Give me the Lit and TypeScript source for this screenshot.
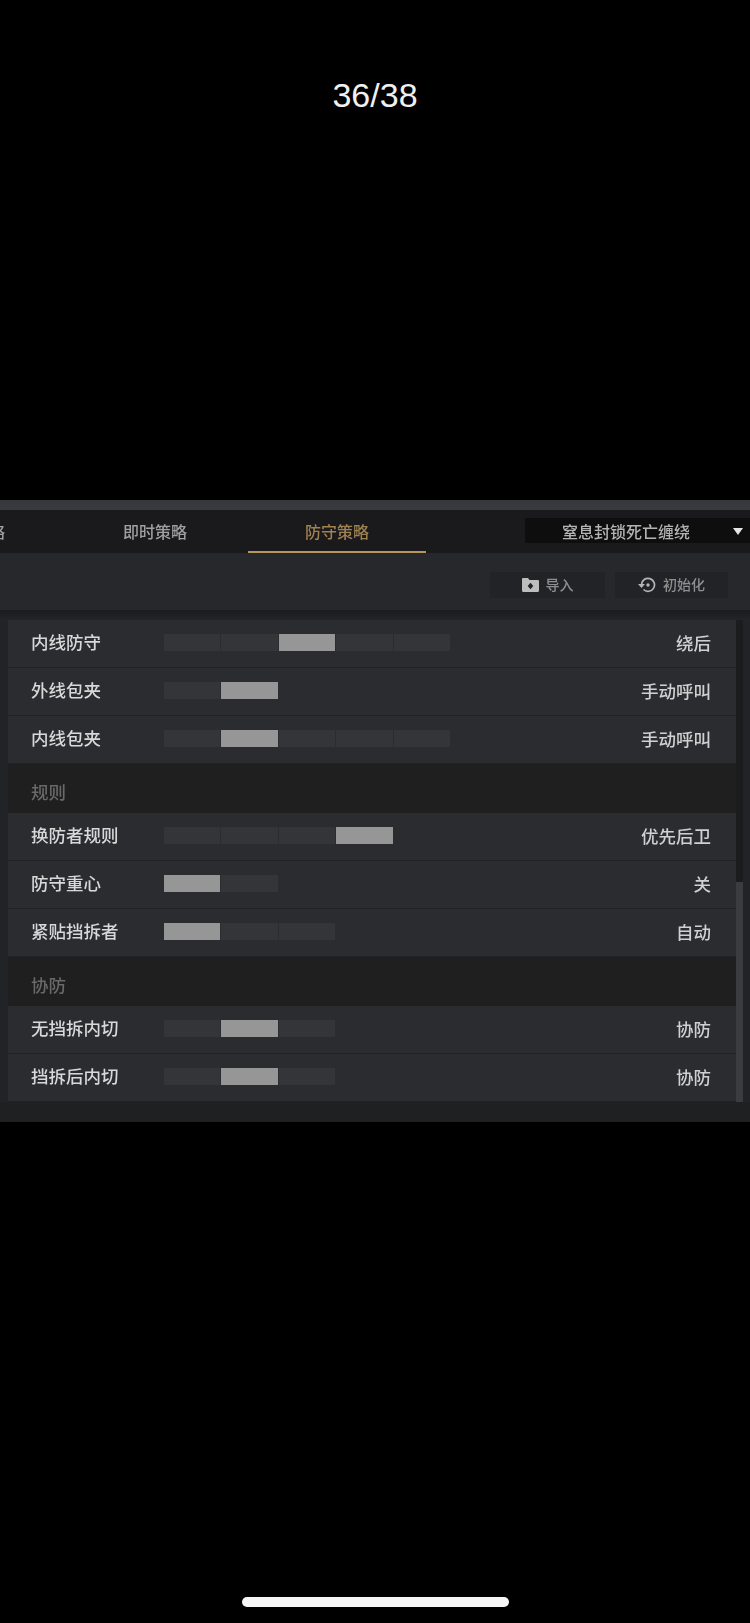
import { LitElement, html, css } from "lit";
import { customElement } from "lit/decorators.js";

type Row = { kind: "row"; label: string; segs: number; on: number; value: string } | { kind: "section"; label: string };

const ROWS: Row[] = [
  { kind: "row", label: "内线防守", segs: 5, on: 2, value: "绕后" },
  { kind: "row", label: "外线包夹", segs: 2, on: 1, value: "手动呼叫" },
  { kind: "row", label: "内线包夹", segs: 5, on: 1, value: "手动呼叫" },
  { kind: "section", label: "规则" },
  { kind: "row", label: "换防者规则", segs: 4, on: 3, value: "优先后卫" },
  { kind: "row", label: "防守重心", segs: 2, on: 0, value: "关" },
  { kind: "row", label: "紧贴挡拆者", segs: 3, on: 0, value: "自动" },
  { kind: "section", label: "协防" },
  { kind: "row", label: "无挡拆内切", segs: 3, on: 1, value: "协防" },
  { kind: "row", label: "挡拆后内切", segs: 3, on: 1, value: "协防" },
];

@customElement("app-root")
export class AppRoot extends LitElement {
  static styles = css`
    :host { display: block; width: 750px; height: 1623px; background: #000; overflow: hidden; position: relative;
      font-family: "Noto Sans CJK SC", "Liberation Sans", sans-serif; }
    .counter { height: 190px; padding-top: 70px; box-sizing: border-box; text-align: center;
      font: 400 34px/50px "Liberation Sans", Arial, sans-serif; color: #f0f0f0; }
    .spacer { height: 310px; }
    .panel { height: 622px; background: #1f2022; display: flex; flex-direction: column; filter: blur(0.6px); overflow: hidden; }
    .strip { height: 10px; flex: none; background: linear-gradient(#36373b, #3a3b40); }
    .tabbar { height: 43px; flex: none; background: #1a1a1c; display: flex; align-items: stretch; position: relative; }
    .tabs { display: flex; gap: 4px; margin-left: -116px; }
    .tab { width: 178px; display: flex; align-items: center; justify-content: center; font-size: 16px; font-weight: 500; color: #a0a0a0; box-sizing: border-box; border-bottom: 2px solid transparent; }
    .tab.active { color: #a08250; border-bottom-color: #b8955c; }
    .select { margin-left: auto; align-self: center; width: 225px; height: 25px; background: #0e0e0f; display: flex; align-items: center; position: relative; margin-top: -2px; }
    .select span { font-size: 16px; font-weight: 500; color: #b4b4b4; margin-left: 37px; line-height: 25px; padding-top: 1px; }
    .arrow { position: absolute; right: 7px; top: 10px; width: 0; height: 0; border-left: 5px solid transparent; border-right: 5px solid transparent; border-top: 7px solid #e6e6e6; }
    .toolbar { height: 57px; flex: none; background: #27282b; display: flex; justify-content: flex-end; align-items: center; gap: 10px; padding-right: 22px; padding-top: 7px; box-sizing: border-box; }
    .btn { height: 26px; background: #222326; display: flex; align-items: center; justify-content: center; gap: 7px; color: #8f8f8f; font-size: 14px; font-weight: 500; }
    .btn span { margin-top: -2px; }
    .btn.a { width: 115px; }
    .btn.b { width: 113px; }
    .btn svg { display: block; }
    .shade { height: 10px; flex: none; background: linear-gradient(#1a1b1d, #232427); }
    .listwrap { display: flex; padding-left: 8px; background: #222326; }
    .list { width: 728px; flex: none; }
    .row { height: 48px; box-sizing: border-box; background: #2b2c30; border-bottom: 1px solid #212225; display: flex; align-items: center; padding: 0 25px 3px 23px; }
    .row .label { width: 132.5px; flex: none; font-size: 17.5px; font-weight: 500; color: #d8d8d8; line-height: 24px; white-space: nowrap; }
    .segs { display: flex; gap: 1px; }
    .seg { width: 56.5px; height: 17px; background: #343539; }
    .seg.on { background: #969696; }
    .row .value { margin-left: auto; font-size: 17.5px; font-weight: 500; color: #d0d0d0; white-space: nowrap; }
    .section { height: 49px; box-sizing: border-box; background: #201f20; display: flex; align-items: center; padding: 5px 0 0 23px; font-size: 17.5px; font-weight: 500; color: #696969; }
    .track { width: 7px; flex: none; display: flex; flex-direction: column; justify-content: flex-end; background: #1b1c1e; }
    .thumb { height: 220px; background: #3b3c40; }
    .home { position: absolute; left: 242px; top: 1597px; width: 267px; height: 10px; border-radius: 5px; background: #f6f6f6; }
  `;

  private renderRow(r: Row) {
    if (r.kind === "section") return html`<div class="section">${r.label}</div>`;
    return html`<div class="row">
      <div class="label">${r.label}</div>
      <div class="segs">
        ${Array.from({ length: r.segs }, (_, i) => html`<div class="seg ${i === r.on ? "on" : ""}"></div>`)}
      </div>
      <div class="value">${r.value}</div>
    </div>`;
  }

  render() {
    return html`
      <div class="counter">36/38</div>
      <div class="spacer"></div>
      <div class="panel">
        <div class="strip"></div>
        <div class="tabbar">
          <div class="tabs">
            <div class="tab">进攻策略</div>
            <div class="tab">即时策略</div>
            <div class="tab active">防守策略</div>
          </div>
          <div class="select"><span>窒息封锁死亡缠绕</span><div class="arrow"></div></div>
        </div>
        <div class="toolbar">
          <div class="btn a">
            <svg width="17" height="14" viewBox="0 0 17 14"><path fill="#bdbdbd" fill-rule="evenodd" d="M0 1.200C0 .5.500 0 1.200 0H6l1.500 2h8.300c.7 0 1.200.5 1.200 1.200v9.600c0 .7-.5 1.200-1.200 1.200H1.200C.5 14 0 13.500 0 12.800zM8.500 4.800 5.700 8l2.800 3.200L11.300 8z"/></svg>
            <span>导入</span>
          </div>
          <div class="btn b">
            <svg width="18" height="18" viewBox="0 0 18 18" fill="none"><path stroke="#b5b5b5" stroke-width="1.700" d="M3.500 8.500a6.500 6.500 0 1 1 2 5"/><path fill="#b5b5b5" d="M0 8h7L3.500 12z"/><circle cx="10" cy="9" r="1.700" fill="#b5b5b5"/></svg>
            <span>初始化</span>
          </div>
        </div>
        <div class="shade"></div>
        <div class="listwrap">
          <div class="list">${ROWS.map((r) => this.renderRow(r))}</div>
          <div class="track"><div class="thumb"></div></div>
        </div>
      </div>
      <div class="home"></div>
    `;
  }
}
